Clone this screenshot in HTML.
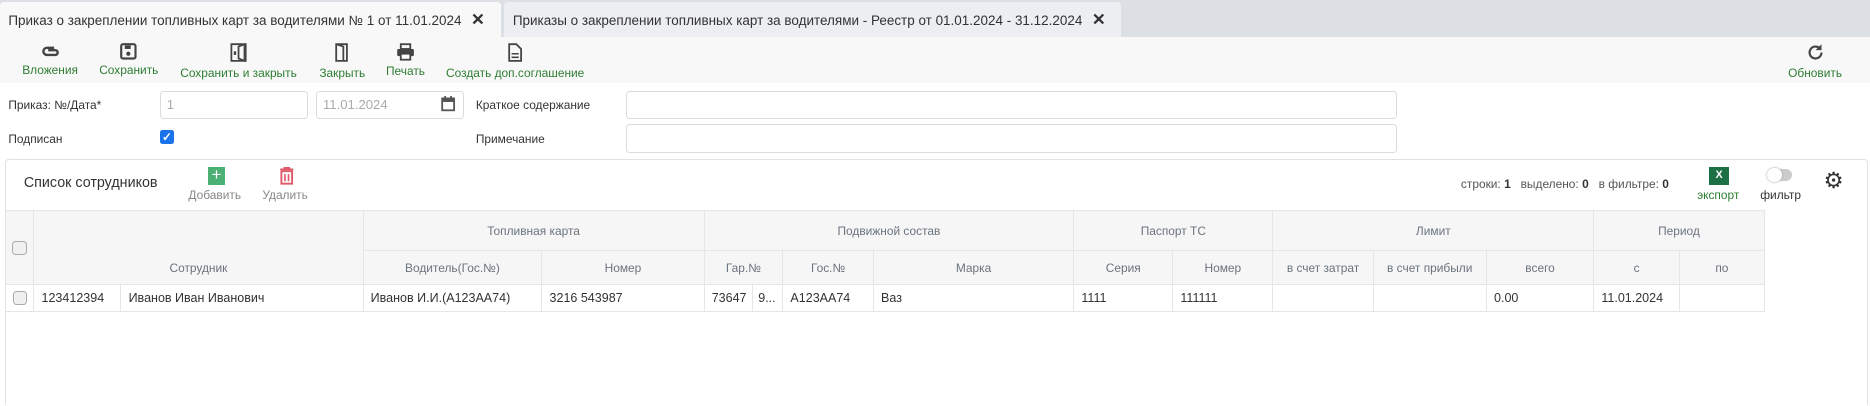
<!DOCTYPE html>
<html><head><meta charset="utf-8">
<style>
*{box-sizing:border-box;margin:0;padding:0}
html{width:1870px;height:406px;overflow:hidden;background:#fff}
body{width:1568px;height:340px;zoom:1.1926;background:#fff;font-family:"Liberation Sans",sans-serif;font-size:11px;color:#333;position:relative;overflow:hidden}
.a{position:absolute;white-space:nowrap}
.tabs{position:absolute;left:0;top:0;width:1568px;height:31px;background:#dcdfe3}
.tab{position:absolute;top:2px;height:29px;line-height:30px;font-size:11.3px;color:#333;padding-left:7px;border-radius:3px 3px 0 0;white-space:nowrap;overflow:hidden}
.x{font-weight:bold;font-size:14px;margin-left:8px;color:#333}
.tb{position:absolute;left:0;top:31px;width:1568px;height:39px;background:#f8f8f8}
.btn{position:absolute;top:36px;text-align:center;color:#2e7d32;font-size:10px;white-space:nowrap}
.btn svg{display:block;margin:0 auto 3px}
.lbl{font-size:10px;color:#333}
.inp{position:absolute;height:24px;border:1px solid #dcdcdc;border-radius:3px;background:#fff;color:#aaa;font-size:11px;line-height:22px;padding-left:5px}
.card{position:absolute;left:4px;top:133px;width:1562px;height:207px;border:1px solid #dfe1e5;border-bottom:none;border-radius:3px 3px 0 0}
table{position:absolute;left:4px;top:176px;border-collapse:collapse;table-layout:fixed}
td,th{border:1px solid #e5e6e8;font-size:10px;white-space:nowrap;overflow:hidden}
th{background:#f6f6f6;color:#6b737d;font-weight:normal;text-align:center}
td{height:23px;padding-left:6px;color:#333;font-size:10.5px}
.cb{display:inline-block;width:12px;height:12px;border:1px solid #aaa;border-radius:3px;background:#f0f0f0;vertical-align:middle}
</style></head><body>
<div class="tabs"></div>
<div class="tab" style="left:0;width:420px;background:#f8f8f8">Приказ о закреплении топливных карт за водителями № 1 от 11.01.2024<span class="x">✕</span></div>
<div class="tab" style="left:423px;width:517px;background:#eceef1">Приказы о закреплении топливных карт за водителями - Реестр от 01.01.2024 - 31.12.2024<span class="x">✕</span></div>
<div class="tb"></div>

<div class="btn" style="left:17px;width:50px"><svg width="16" height="14" viewBox="0 0 16 14"><path d="M11 4H5a2.5 2.5 0 0 0 0 6h7a2 2 0 0 0 0-4H6" fill="none" stroke="#444" stroke-width="2"/></svg>Вложения</div>
<div class="btn" style="left:82px;width:52px"><svg width="14" height="14" viewBox="0 0 14 14"><rect x="1" y="1" width="12" height="12" rx="1.5" fill="none" stroke="#444" stroke-width="1.8"/><rect x="4" y="2" width="5" height="3" fill="#444"/><circle cx="7" cy="9" r="1.8" fill="#444"/></svg>Сохранить</div>
<div class="btn" style="left:148px;width:104px"><svg width="16" height="16" viewBox="0 0 16 16"><path d="M2 1h12v14H2zM8 3l5-2v14l-5-2z" fill="none" stroke="#444" stroke-width="1.5"/><rect x="4" y="7" width="2" height="3" fill="#444"/></svg>Сохранить и закрыть</div>
<div class="btn" style="left:266px;width:42px"><svg width="12" height="16" viewBox="0 0 12 16"><path d="M1 1h9v14H1zM1 1l6 2v12" fill="none" stroke="#444" stroke-width="1.5"/></svg>Закрыть</div>
<div class="btn" style="left:322px;width:36px"><svg width="16" height="15" viewBox="0 0 16 15"><rect x="4" y="1" width="8" height="4" fill="none" stroke="#444" stroke-width="1.5"/><rect x="1" y="5" width="14" height="6" rx="1" fill="#444"/><rect x="4" y="9" width="8" height="5" fill="#fff" stroke="#444" stroke-width="1.5"/></svg>Печать</div>
<div class="btn" style="left:373px;width:118px"><svg width="12" height="16" viewBox="0 0 12 16"><path d="M1 1h6l4 4v10H1z" fill="none" stroke="#444" stroke-width="1.5"/><path d="M3 9h6M3 12h6" stroke="#444" stroke-width="1.3"/></svg>Создать доп.соглашение</div>
<div class="btn" style="left:1496px;width:52px"><svg width="16" height="16" viewBox="0 0 16 16"><path d="M13 8a5 5 0 1 1-1.5-3.6" fill="none" stroke="#444" stroke-width="1.8"/><path d="M13 1v5H8z" fill="#444"/></svg>Обновить</div>

<div class="a lbl" style="left:7px;top:82px">Приказ: №/Дата*</div>
<div class="inp" style="left:134px;top:76px;width:124px">1</div>
<div class="inp" style="left:265px;top:76px;width:124px">11.01.2024<svg style="position:absolute;right:6px;top:4px" width="12" height="13" viewBox="0 0 12 13"><rect x="1" y="2" width="10" height="10" fill="none" stroke="#555" stroke-width="1.5"/><rect x="1" y="2" width="10" height="3" fill="#555"/><path d="M3.5 0v3M8.5 0v3" stroke="#555" stroke-width="1.5"/></svg></div>
<div class="a lbl" style="left:399px;top:82px">Краткое содержание</div>
<div class="inp" style="left:525px;top:76px;width:646px"></div>
<div class="a lbl" style="left:7px;top:111px">Подписан</div>
<div class="a" style="left:134px;top:109px;width:12px;height:12px;background:#1a73e8;border-radius:2px;color:#fff;font-size:10px;line-height:12px;text-align:center;font-weight:bold">✓</div>
<div class="a lbl" style="left:399px;top:111px">Примечание</div>
<div class="inp" style="left:525px;top:104px;width:646px"></div>

<div class="card"></div>
<div class="a" style="left:20px;top:147px;font-size:12px;color:#333">Список сотрудников</div>
<div class="a" style="left:174px;top:140px;width:15px;height:15px;background:#4caf73;color:#fff;text-align:center;line-height:14px;font-size:14px">+</div>
<div class="a" style="left:158px;top:158px;color:#888;font-size:10px">Добавить</div>
<svg class="a" style="left:234px;top:140px" width="13" height="15" viewBox="0 0 13 15"><path d="M1 2h11M4.5 2V0.5h4V2" stroke="#e05a6a" stroke-width="1.5" fill="none"/><rect x="2" y="3.5" width="9" height="10.5" fill="none" stroke="#e05a6a" stroke-width="1.6"/><path d="M5 6v6M8 6v6" stroke="#e05a6a" stroke-width="1.4"/></svg>
<div class="a" style="left:220px;top:158px;color:#888;font-size:10px">Удалить</div>

<div class="a" style="left:1225px;top:148px;font-size:10px;color:#555">строки: <b style="color:#333">1</b>&nbsp;&nbsp; выделено: <b style="color:#333">0</b>&nbsp;&nbsp; в фильтре: <b style="color:#333">0</b></div>
<div class="a" style="left:1433px;top:140px;width:17px;height:15px;background:#1d7044;color:#fff;text-align:center;font-size:9px;line-height:15px;font-weight:bold">X</div>
<div class="a" style="left:1423px;top:158px;color:#2e7d32;font-size:10px">экспорт</div>
<div class="a" style="left:1483px;top:142px;width:20px;height:10px;border-radius:5px;background:#ccc"></div>
<div class="a" style="left:1482px;top:141px;width:12px;height:12px;border-radius:6px;background:#fff;box-shadow:0 0 2px #999"></div>
<div class="a" style="left:1476px;top:158px;color:#333;font-size:10px">фильтр</div>
<div class="a" style="left:1529px;top:142px;font-size:19px;line-height:20px;color:#333">⚙</div>

<table>
<colgroup><col style="width:24px"><col style="width:73px"><col style="width:203px"><col style="width:150px"><col style="width:136px"><col style="width:41px"><col style="width:25px"><col style="width:76px"><col style="width:168px"><col style="width:83px"><col style="width:84px"><col style="width:84px"><col style="width:95px"><col style="width:90px"><col style="width:72px"><col style="width:71px"></colgroup>
<tr style="height:34px"><th rowspan="2" style="text-align:center"><span class="cb"></span></th><th rowspan="2" colspan="2" style="vertical-align:bottom;padding-bottom:7px">Сотрудник</th><th colspan="2">Топливная карта</th><th colspan="4">Подвижной состав</th><th colspan="2">Паспорт ТС</th><th colspan="3">Лимит</th><th colspan="2">Период</th></tr>
<tr style="height:28px"><th>Водитель(Гос.№)</th><th>Номер</th><th colspan="2">Гар.№</th><th>Гос.№</th><th>Марка</th><th>Серия</th><th>Номер</th><th>в счет затрат</th><th>в счет прибыли</th><th>всего</th><th>с</th><th>по</th></tr>
<tr><td style="padding-left:6px"><span class="cb"></span></td><td>123412394</td><td>Иванов Иван Иванович</td><td>Иванов И.И.(А123АА74)</td><td>3216 543987</td><td>73647</td><td style="padding-left:4px">9...</td><td>А123АА74</td><td>Ваз</td><td>1111</td><td>111111</td><td></td><td></td><td>0.00</td><td>11.01.2024</td><td></td></tr>
</table>
</body></html>
